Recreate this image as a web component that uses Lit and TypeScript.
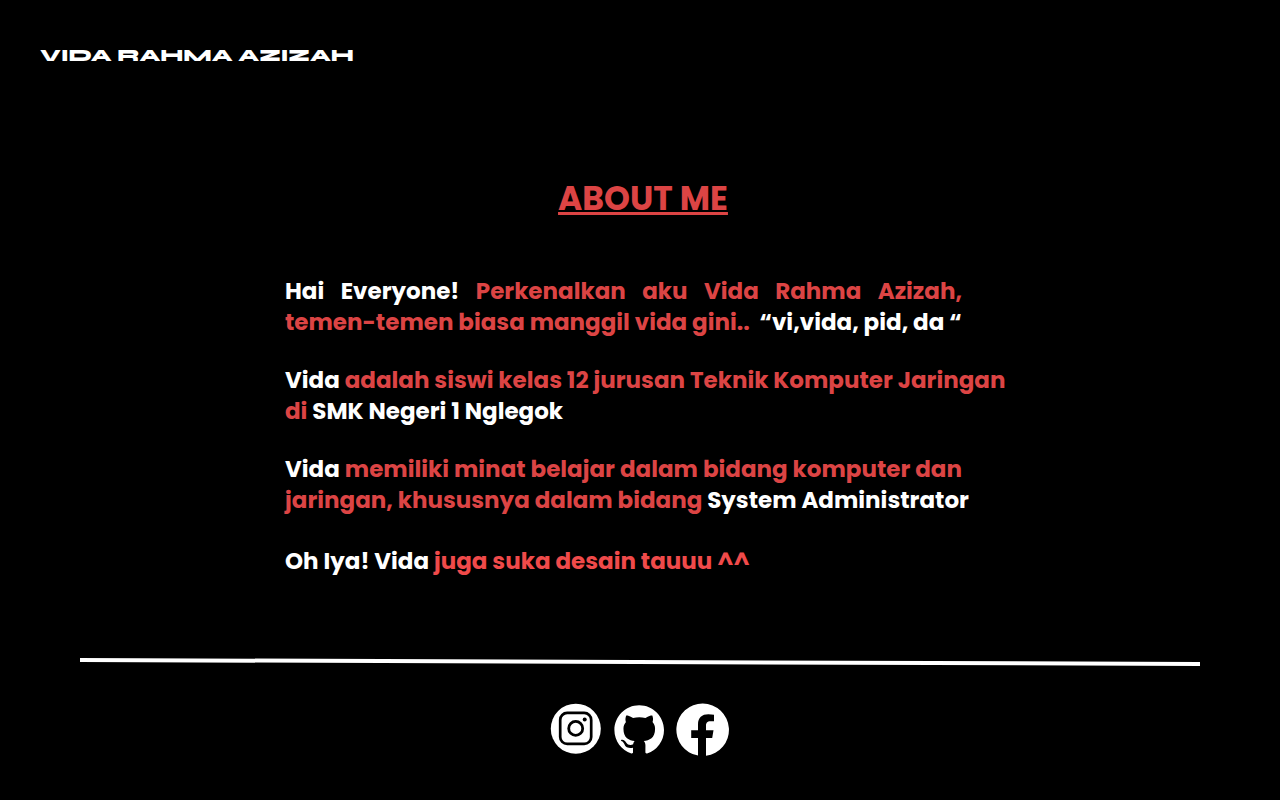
import { LitElement, html, css } from "lit";
import { customElement } from "lit/decorators.js";

@customElement("app-root")
export class AppRoot extends LitElement {
  static styles = css`
    :host {
      display: flex;
      flex-direction: column;
      box-sizing: border-box;
      min-height: 100vh;
      background: #000;
      color: #fff;
      font-family: Poppins, Inter, "Open Sans", sans-serif;
    }
    .top {
      padding: 40px 40px 0;
    }
    .brand {
      display: inline-block;
      font: 800 18px/30px Syne, "DejaVu Sans", sans-serif;
      color: #fff;
      text-decoration: none;
      white-space: nowrap;
    }
    .about {
      box-sizing: border-box;
      width: 100%;
      max-width: 710px;
      margin: 0 auto;
      padding-top: 105px;
    }
    h1 {
      margin: 0 0 53px;
      padding-left: 6px;
      font-size: 33px;
      line-height: 48px;
      text-align: center;
      color: #dc4444;
      text-decoration: underline;
      text-decoration-thickness: 3px;
      text-underline-offset: 2px;
      text-decoration-skip-ink: none;
    }
    .copy {
      display: flex;
      flex-direction: column;
      gap: 27px;
      font-size: 23px;
      line-height: 31px;
      font-weight: 700;
    }
    p {
      margin: 0;
    }
    .line {
      display: block;
      white-space: nowrap;
    }
    .spread {
      max-width: 677px;
      white-space: normal;
      text-align-last: justify;
    }
    em {
      font-style: normal;
      color: #dc4444;
    }
    .bright {
      color: #f04a4a;
    }
    .last {
      padding-top: 3px;
    }
    .bottom {
      padding: 81px 80px 40px;
    }
    .rule {
      display: block;
      width: 100%;
      height: 8px;
    }
    .social {
      display: flex;
      justify-content: center;
      align-items: center;
      gap: 12px;
      padding-top: 37px;
    }
    .social a {
      display: block;
      color: #fff;
    }
    .social svg {
      display: block;
    }
  `;

  render() {
    return html`
      <header class="top"><a class="brand" href="#">VIDA RAHMA AZIZAH</a></header>
      <main class="about">
        <h1>ABOUT ME</h1>
        <div class="copy">
          <p>
            <span class="line spread">Hai Everyone! <em>Perkenalkan aku Vida Rahma Azizah,</em></span>
            <span class="line"><em>temen-temen biasa manggil vida gini..</em>&nbsp; “vi,vida, pid, da “</span>
          </p>
          <p>
            <span class="line">Vida <em>adalah siswi kelas 12 jurusan Teknik Komputer Jaringan</em></span>
            <span class="line"><em>di</em> SMK Negeri 1 Nglegok</span>
          </p>
          <p>
            <span class="line spread">Vida <em>memiliki minat belajar dalam bidang komputer dan</em></span>
            <span class="line"><em>jaringan, khususnya dalam bidang</em> System Administrator</span>
          </p>
          <p class="last">
            <span class="line">Oh Iya! Vida <em class="bright">juga suka desain tauuu ^^</em></span>
          </p>
        </div>
      </main>
      <footer class="bottom">
        <svg class="rule" viewBox="0 0 1120 8" preserveAspectRatio="none" aria-hidden="true">
          <path d="M0 2L1120 6" stroke="#fff" stroke-width="4" />
        </svg>
        <nav class="social" aria-label="Social">
          <a href="#" aria-label="Instagram">
            <svg width="51" height="54" viewBox="0 0 51 54">
              <circle cx="25.8" cy="25.7" r="25" fill="#fff" />
              <rect x="10.2" y="9.9" width="31" height="31" rx="7" fill="none" stroke="#000" stroke-width="2.7" />
              <circle cx="25.7" cy="25.4" r="7" fill="none" stroke="#000" stroke-width="2.8" />
              <circle cx="34.7" cy="16.5" r="2" fill="#000" />
            </svg>
          </a>
          <a href="#" aria-label="GitHub">
            <svg width="51" height="54" viewBox="0 0 51 54">
              <path
                transform="translate(1.4 2.2) scale(3.1)"
                fill="#fff"
                d="M8 0C3.58 0 0 3.58 0 8c0 3.54 2.29 6.53 5.47 7.59.4.07.55-.17.55-.38 0-.19-.01-.82-.01-1.49-2.01.37-2.53-.49-2.69-.94-.09-.23-.48-.94-.82-1.13-.28-.15-.68-.52-.01-.53.63-.01 1.08.58 1.23.82.72 1.21 1.87.87 2.33.66.07-.52.28-.87.51-1.07-1.78-.2-3.64-.89-3.64-3.95 0-.87.31-1.59.82-2.15-.08-.2-.36-1.02.08-2.12 0 0 .67-.21 2.2.82.64-.18 1.32-.27 2-.27s1.36.09 2 .27c1.53-1.04 2.2-.82 2.2-.82.44 1.1.16 1.92.08 2.12.51.56.82 1.27.82 2.15 0 3.07-1.87 3.75-3.65 3.95.29.25.54.73.54 1.48 0 1.07-.01 1.93-.01 2.2 0 .21.15.46.55.38A8.01 8.01 0 0 0 16 8c0-4.42-3.58-8-8-8z"
              />
            </svg>
          </a>
          <a href="#" aria-label="Facebook">
            <svg width="54" height="54" viewBox="0 0 54 54">
              <path
                fill="#fff"
                d="M26.8.6A26.2 26.2 0 0 0 22 52.6V35.1H15.2V27.2H22V21.3C22 14.5 26 11.2 32.3 11.2Q35.5 11.2 38 11.7V18.2H34.6C31 18.2 30 20 30 22.8V27.2H37.5L36.2 35.1H30V52.8A26.2 26.2 0 0 0 26.8.6Z"
              />
            </svg>
          </a>
        </nav>
      </footer>
    `;
  }
}
